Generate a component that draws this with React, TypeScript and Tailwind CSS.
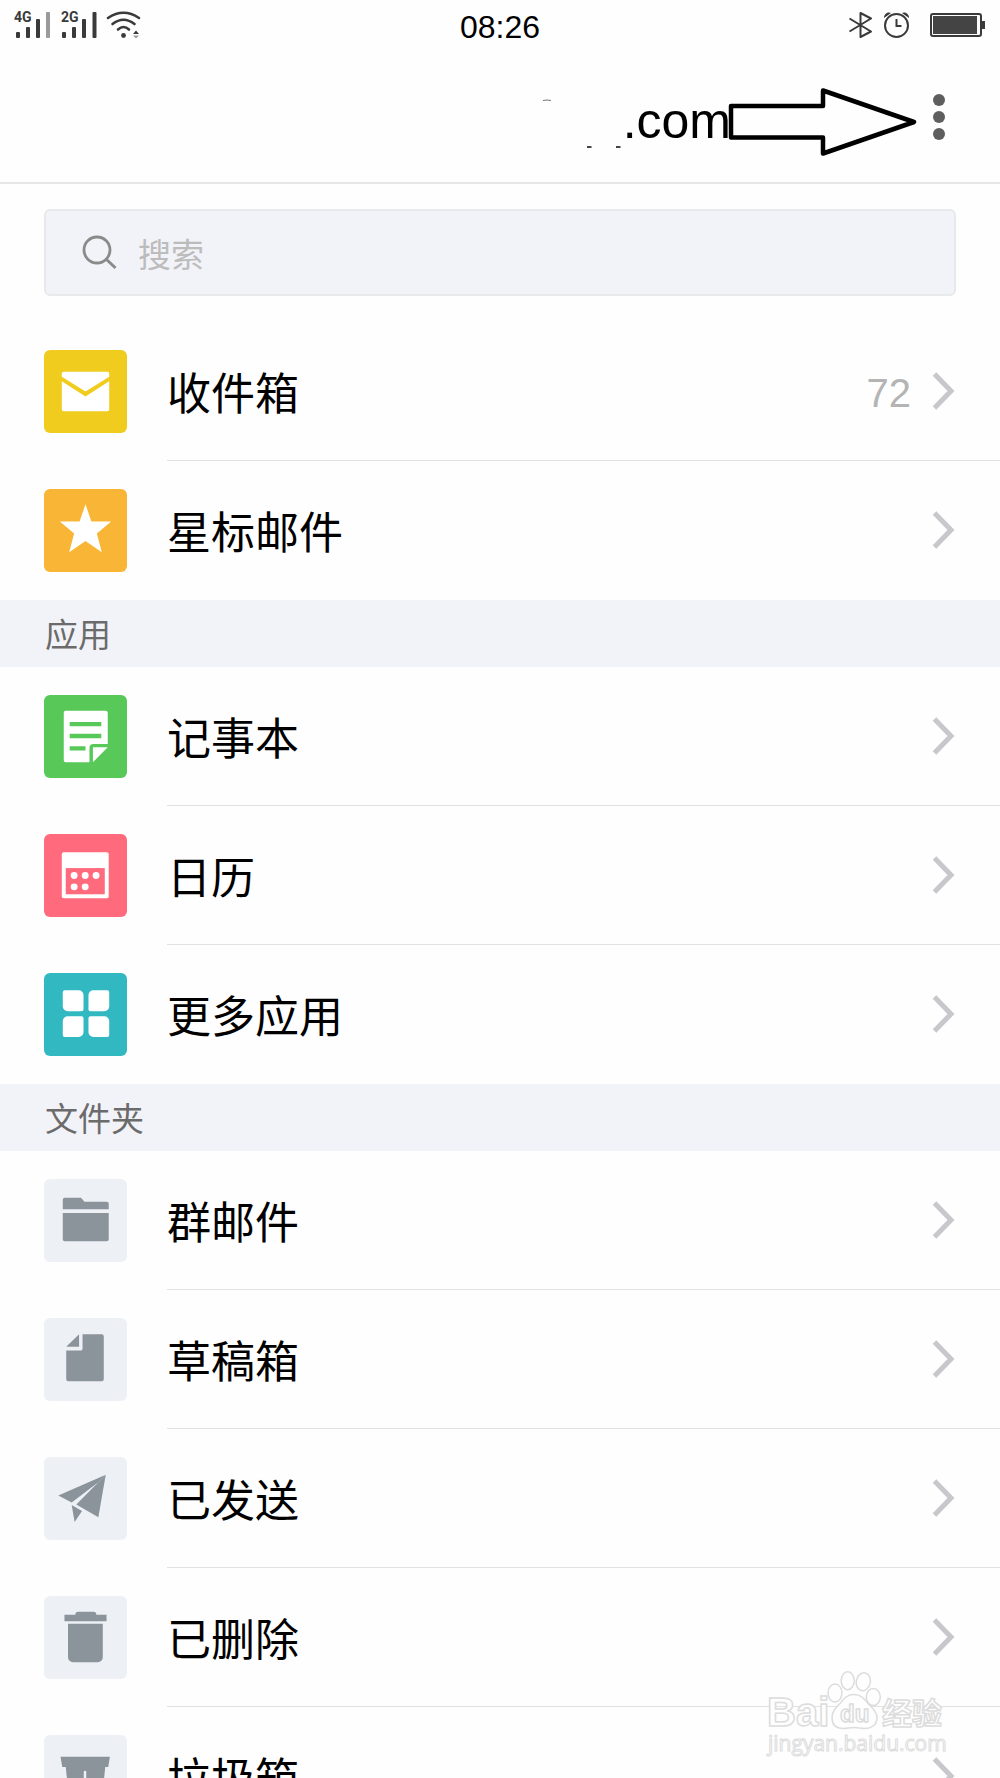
import type { ReactNode } from "react";

const GREY = "#8b949b";

type Item = { label: string; tile: string; icon: ReactNode; count?: number };

const mailItems: Item[] = [
  {
    label: "收件箱",
    tile: "bg-[#f0cc1f]",
    count: 72,
    icon: (
      <g fill="#fff">
        <path d="M20 22h44a2 2 0 0 1 2 2v3L42 42 18 27V24a2 2 0 0 1 2-2z" />
        <path d="M18 31.500 42 47 66 31.500V60a2 2 0 0 1-2 2H20a2 2 0 0 1-2-2z" />
      </g>
    ),
  },
  {
    label: "星标邮件",
    tile: "bg-[#f9b536]",
    icon: (
      <path
        fill="#fff"
        d="M42 15.500 48 33H68L53.500 45 58.500 64 42 52.500 25.500 64 30.500 45 16 33H36z"
      />
    ),
  },
];

const appItems: Item[] = [
  {
    label: "记事本",
    tile: "bg-[#58c959]",
    icon: (
      <>
        <path
          fill="#fff"
          d="M22 16H62.500a2 2 0 0 1 2 2V49.500H50a4 4 0 0 0-4 4V68H22a2 2 0 0 1-2-2V18a2 2 0 0 1 2-2z"
        />
        <path fill="#fff" d="M49.500 53H64.500L49.500 68z" />
        <path stroke="#58c959" strokeWidth="4.500" d="M26 29.500H58M26 41.500H58M26 54H42" />
      </>
    ),
  },
  {
    label: "日历",
    tile: "bg-[#ff6a7d]",
    icon: (
      <>
        <rect x="18" y="18.500" width="47.500" height="46.500" rx="2" fill="#fff" />
        <rect x="22" y="34.500" width="39.500" height="26.500" fill="#ff6a7d" />
        <g fill="#fff">
          <circle cx="30.500" cy="42" r="3.500" />
          <circle cx="41.700" cy="42" r="3.500" />
          <circle cx="52.700" cy="42" r="3.500" />
          <circle cx="30.500" cy="53.500" r="3.500" />
          <circle cx="41.700" cy="53.500" r="3.500" />
        </g>
      </>
    ),
  },
  {
    label: "更多应用",
    tile: "bg-[#31b8c1]",
    icon: (
      <g fill="#fff">
        <path d="M21 17.500H35a5 5 0 0 1 5 5V36.700a2 2 0 0 1-2 2H24a5 5 0 0 1-5-5V19.500a2 2 0 0 1 2-2z" />
        <path d="M50 17.500H64a2 2 0 0 1 2 2V33.700a5 5 0 0 1-5 5H47a2 2 0 0 1-2-2V22.500a5 5 0 0 1 5-5z" />
        <path d="M24 43.700H38a2 2 0 0 1 2 2V59.700a5 5 0 0 1-5 5H21a2 2 0 0 1-2-2V48.700a5 5 0 0 1 5-5z" />
        <path d="M47 43.700H61a5 5 0 0 1 5 5V62.700a2 2 0 0 1-2 2H50a5 5 0 0 1-5-5V45.700a2 2 0 0 1 2-2z" />
      </g>
    ),
  },
];

const folderItems: Item[] = [
  {
    label: "群邮件",
    tile: "bg-[#edf1f6]",
    icon: (
      <g fill={GREY}>
        <path d="M21 19H37.500L41 23H63.500a2 2 0 0 1 2 2V30.500H19V21a2 2 0 0 1 2-2z" />
        <path d="M19 34.500H65.500V61a2 2 0 0 1-2 2H21a2 2 0 0 1-2-2z" />
      </g>
    ),
  },
  {
    label: "草稿箱",
    tile: "bg-[#edf1f6]",
    icon: (
      <g fill={GREY}>
        <path d="M39 16.500H58.500a2 2 0 0 1 2 2V62a2 2 0 0 1-2 2H24.500a2 2 0 0 1-2-2V33H37a2 2 0 0 0 2-2z" />
        <path d="M22.500 29 35.500 16.500V29z" />
      </g>
    ),
  },
  {
    label: "已发送",
    tile: "bg-[#edf1f6]",
    icon: (
      <g fill={GREY}>
        <path d="M14.500 39 62.500 18 55 25.500 28 46z" />
        <path d="M62.500 18 55 61 32.700 48 55 25.500z" />
        <path d="M28 48.700 38.500 54.700 31 65.700z" />
      </g>
    ),
  },
  {
    label: "已删除",
    tile: "bg-[#edf1f6]",
    icon: (
      <g fill={GREY}>
        <path d="M20.700 19H31.700a3 3 0 0 1 3-3H50a3 3 0 0 1 3 3H63.300V25.500H20.700z" />
        <path d="M24.300 28H59.500V62a5 5 0 0 1-5 5H29.300a5 5 0 0 1-5-5z" />
      </g>
    ),
  },
  {
    label: "垃圾箱",
    tile: "bg-[#edf1f6]",
    icon: (
      <>
        <path
          fill={GREY}
          d="M16.700 22H66.700L65 32.300H62L58.500 67H25.500L22 32.300H18.500z"
        />
        <path stroke="#edf1f6" strokeWidth="2.500" strokeLinecap="round" d="M41.500 37.500V60" />
      </>
    ),
  },
];

function StatusBar() {
  return (
    <div className="grid h-[50px] shrink-0 grid-cols-3 items-center text-[#3a3a3a]">
      <div className="relative h-[50px] font-['Roboto','Liberation_Sans',sans-serif] text-sm font-bold leading-none">
        <svg width="150" height="50" viewBox="0 0 150 50" aria-hidden="true">
          <g fill="currentColor">
            <rect x="16" y="32" width="4" height="6" rx="1" />
            <rect x="26" y="27" width="4" height="11" rx="1" />
            <rect x="36" y="19" width="4" height="19" rx="1" />
            <rect x="46" y="12" width="4" height="26" rx="1" fill="#9a9a9a" />
            <rect x="62" y="32" width="4" height="6" rx="1" />
            <rect x="72" y="27" width="4" height="11" rx="1" />
            <rect x="82" y="19" width="4" height="19" rx="1" />
            <rect x="92.500" y="12" width="4" height="26" rx="1" />
            <circle cx="123.500" cy="35.500" r="2.400" />
            <path d="M133 34 136 30.500 139 34z" />
            <path d="M133 35.500H139L136 38.500z" fill="#9a9a9a" />
          </g>
          <g fill="none" stroke="currentColor" strokeWidth="2.600" strokeLinecap="round">
            <path d="M108 18Q123.500 7.500 139 18" />
            <path d="M112.500 24Q123.500 15.500 134.500 24" />
            <path d="M118 29.500Q123.500 24.500 129 29.500" />
          </g>
        </svg>
        <span className="absolute left-[14px] top-[10px]">4G</span>
        <span className="absolute left-[61px] top-[10px]">2G</span>
      </div>
      <time className="pt-1 text-center font-['Liberation_Sans',Arial,sans-serif] text-[32px] leading-none text-black">
        08:26
      </time>
      <svg
        className="justify-self-end"
        width="160"
        height="50"
        viewBox="840 0 160 50"
        fill="none"
        stroke="currentColor"
        strokeWidth="2"
        aria-hidden="true"
      >
        <path strokeLinejoin="round" d="M849.500 18.500 871 31.500 860.500 37V13L871 18.500 849.500 31.500" />
        <circle cx="896.500" cy="25.500" r="11.500" />
        <path d="M896.500 19V26H901.500" />
        <path fill="currentColor" stroke="none" d="M884 18a5 5 0 0 1 7-5zM909 18a5 5 0 0 0-7-5z" />
        <rect x="931" y="14" width="50" height="22" rx="2" />
        <rect x="933" y="16" width="44" height="18" fill="#444" stroke="none" />
        <rect x="982" y="21" width="3" height="8" fill="currentColor" stroke="none" />
      </svg>
    </div>
  );
}

function Header() {
  return (
    <header className="relative flex h-[134px] shrink-0 items-start justify-end border-b-2 border-[#e6e6e6]">
      <h1 className="mr-[269px] mt-[41px] font-['Liberation_Sans',Arial,sans-serif] text-[50px] leading-[60px] text-black">
        .com
      </h1>
      <svg
        className="absolute right-[80px] top-[35px]"
        width="390"
        height="75"
        viewBox="530 85 390 75"
        fill="none"
        aria-hidden="true"
      >
        <path d="M543 100.500Q547 99.500 551 100.500" stroke="#777" strokeWidth="1.200" />
        <path d="M587 147H591.500M616 147H620.500" stroke="#444" strokeWidth="2" />
        <path
          d="M731 106H823V90.500L914 122 823 153.500V137.500H731z"
          fill="#fefefe"
          stroke="#000"
          strokeWidth="4.500"
          strokeLinejoin="round"
        />
      </svg>
      <button
        type="button"
        aria-label="菜单"
        className="absolute right-[45px] top-[35px] flex h-[63px] w-8 flex-col items-center justify-center gap-[5px]"
      >
        <span className="size-3 rounded-full bg-[#5e5e5e]" />
        <span className="size-3 rounded-full bg-[#5e5e5e]" />
        <span className="size-3 rounded-full bg-[#5e5e5e]" />
      </button>
    </header>
  );
}

function SearchBox() {
  return (
    <label className="mx-11 mb-[26px] mt-[25px] flex h-[87px] items-center rounded-md border-2 border-[#e8e9ea] bg-[#f2f3f8] pl-9">
      <svg width="36" height="36" viewBox="0 0 36 36" fill="none" stroke="#8a8a8a" aria-hidden="true">
        <circle cx="15" cy="15" r="13" strokeWidth="2.800" />
        <path d="M24 24 33.500 33" strokeWidth="3" />
      </svg>
      <input
        type="text"
        aria-label="搜索"
        placeholder="搜索"
        className="ml-5 min-w-0 flex-1 bg-transparent text-[33px] leading-[48px] text-black outline-none placeholder:text-[#bcbcbc]"
      />
    </label>
  );
}

function Row({ item, last }: { item: Item; last: boolean }) {
  return (
    <li>
      <a href="#" className="flex h-[139px] items-center pl-11">
        <span className={`size-[83px] shrink-0 overflow-hidden rounded-md ${item.tile}`}>
          <svg width="83" height="83" viewBox="0 0 84 84" fill="none" aria-hidden="true">
            {item.icon}
          </svg>
        </span>
        <span
          className={`ml-10 flex h-full flex-1 items-center border-b pr-11 ${
            last ? "border-transparent" : "border-[#e2e2e2]"
          }`}
        >
          <span className="flex-1 text-[44px] leading-[64px] text-black">{item.label}</span>
          {item.count !== undefined && (
            <span className="mr-[21px] mt-1 font-['Liberation_Sans',Arial,sans-serif] text-[40px] leading-none text-[#b4b4b4]">
              {item.count}
            </span>
          )}
          <svg width="24" height="40" viewBox="0 0 24 40" fill="none" aria-hidden="true">
            <path d="M2.500 3 19 20 2.500 37" stroke="#c7c7cc" strokeWidth="5" />
          </svg>
        </span>
      </a>
    </li>
  );
}

function Section({ title, items }: { title?: string; items: Item[] }) {
  return (
    <section>
      {title && (
        <h2 className="flex h-[67px] items-center bg-[#f2f3f8] pl-[45px] pb-0.5 text-[33px] leading-[48px] text-[#6b6b6b]">
          {title}
        </h2>
      )}
      <ul>
        {items.map((item, i) => (
          <Row key={item.label} item={item} last={i === items.length - 1} />
        ))}
      </ul>
    </section>
  );
}

function Watermark() {
  return (
    <svg
      className="pointer-events-none absolute bottom-5 right-[46px]"
      width="190"
      height="90"
      viewBox="762 1668 190 90"
      fill="#fefefe"
      stroke="#dcdcdc"
      strokeWidth="1.500"
      aria-hidden="true"
    >
      <g fontFamily="'Liberation Sans', sans-serif" fontWeight="700">
        <text x="765" y="1726" fontSize="40">Bai</text>
        <ellipse cx="833" cy="1693" rx="7" ry="9" />
        <ellipse cx="845.700" cy="1680.700" rx="6.500" ry="9" />
        <ellipse cx="861.300" cy="1681.700" rx="7" ry="9" transform="rotate(12 861.300 1681.700)" />
        <ellipse cx="871.300" cy="1697" rx="7" ry="8.500" />
        <path d="M852 1694.500c7 0 10 4 14 9 4 4 9 8 9 14 0 8-6 11-12 11-4 0-7-1-11-1s-7 1-11 1c-6 0-11-3-11-11 0-6 4-10 8-14 4-5 7-9 14-9z" />
        <text x="838" y="1722" fontSize="24">du</text>
        <text x="880" y="1724" fontSize="30" fontFamily="'Noto Sans CJK SC', sans-serif">经验</text>
      </g>
      <text x="766" y="1751" fontSize="21" strokeWidth="1" fontFamily="'Open Sans', sans-serif">
        jingyan.baidu.com
      </text>
    </svg>
  );
}

export default function App() {
  return (
    <div className="relative flex h-screen flex-col overflow-hidden bg-[#fefefe] font-['Noto_Sans_CJK_SC',sans-serif]">
      <StatusBar />
      <Header />
      <main className="min-h-0 flex-1 overflow-hidden">
        <SearchBox />
        <Section items={mailItems} />
        <Section title="应用" items={appItems} />
        <Section title="文件夹" items={folderItems} />
      </main>
      <Watermark />
    </div>
  );
}
